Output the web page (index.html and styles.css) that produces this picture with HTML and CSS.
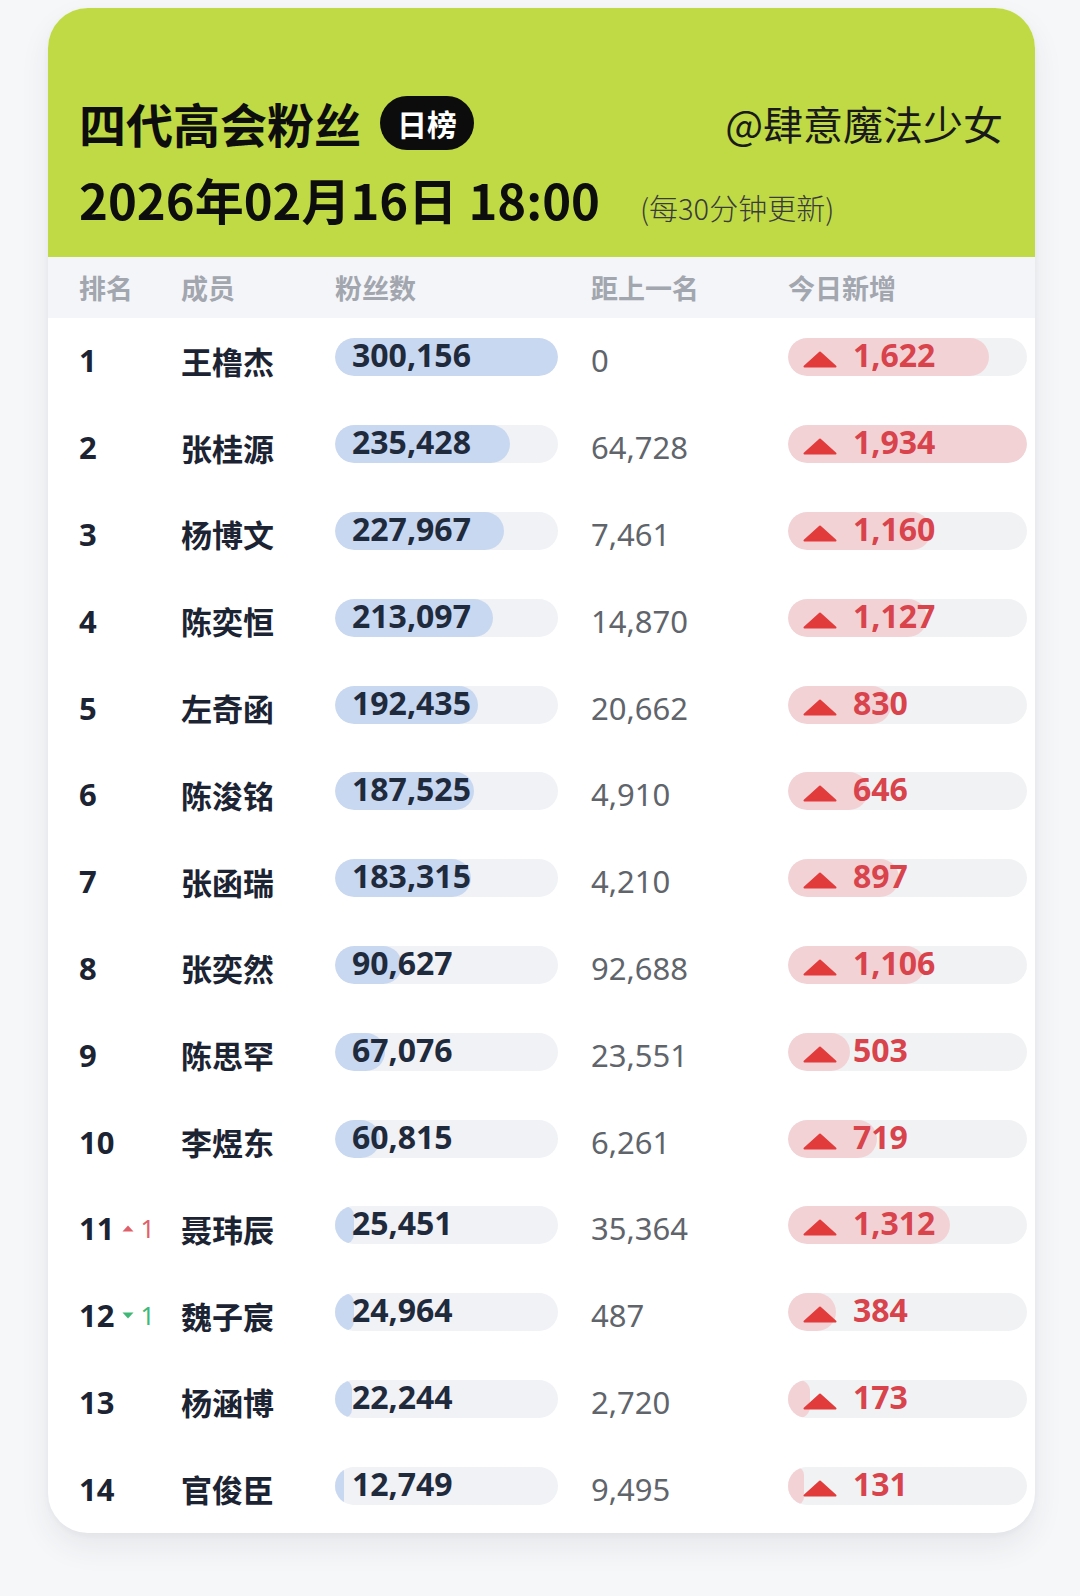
FILE: index.html
```html
<!DOCTYPE html>
<html lang="zh-CN">
<head>
<meta charset="utf-8">
<title>四代高会粉丝 日榜</title>
<link rel="stylesheet" href="styles.css">
</head>
<body>
<div class="page">
  <div class="card">
    <div class="hero">
      <div class="hero-top">
        <div class="title"><span class="title-text">四代高会粉丝</span><span class="badge">日榜</span></div>
        <div class="author">@肆意魔法少女</div>
      </div>
      <div class="date-line"><span class="date">2026年02月16日 18:00</span><span class="note">(每30分钟更新)</span></div>
    </div>
    <div class="thead">
      <div>排名</div><div>成员</div><div>粉丝数</div><div>距上一名</div><div>今日新增</div>
    </div>
    <div class="rows">
      <div class="row"><div class="rank">1</div><div class="name">王橹杰</div><div class="fans"><div class="bar"><div class="track"><div class="fill" style="width:100%"></div></div><span class="val">300,156</span></div></div><div class="dist">0</div><div class="gain"><div class="gbar"><div class="gtrack"><div class="gfill" style="width:83.9%"></div></div><svg class="tri" viewBox="0 0 34 17"><polygon points="17,1.5 32.5,15.5 1.5,15.5"/></svg><span class="gval">1,622</span></div></div></div>
      <div class="row"><div class="rank">2</div><div class="name">张桂源</div><div class="fans"><div class="bar"><div class="track"><div class="fill" style="width:78.4%"></div></div><span class="val">235,428</span></div></div><div class="dist">64,728</div><div class="gain"><div class="gbar"><div class="gtrack"><div class="gfill" style="width:100%"></div></div><svg class="tri" viewBox="0 0 34 17"><polygon points="17,1.5 32.5,15.5 1.5,15.5"/></svg><span class="gval">1,934</span></div></div></div>
      <div class="row"><div class="rank">3</div><div class="name">杨博文</div><div class="fans"><div class="bar"><div class="track"><div class="fill" style="width:76%"></div></div><span class="val">227,967</span></div></div><div class="dist">7,461</div><div class="gain"><div class="gbar"><div class="gtrack"><div class="gfill" style="width:60%"></div></div><svg class="tri" viewBox="0 0 34 17"><polygon points="17,1.5 32.5,15.5 1.5,15.5"/></svg><span class="gval">1,160</span></div></div></div>
      <div class="row"><div class="rank">4</div><div class="name">陈奕恒</div><div class="fans"><div class="bar"><div class="track"><div class="fill" style="width:71%"></div></div><span class="val">213,097</span></div></div><div class="dist">14,870</div><div class="gain"><div class="gbar"><div class="gtrack"><div class="gfill" style="width:58.3%"></div></div><svg class="tri" viewBox="0 0 34 17"><polygon points="17,1.5 32.5,15.5 1.5,15.5"/></svg><span class="gval">1,127</span></div></div></div>
      <div class="row"><div class="rank">5</div><div class="name">左奇函</div><div class="fans"><div class="bar"><div class="track"><div class="fill" style="width:64.1%"></div></div><span class="val">192,435</span></div></div><div class="dist">20,662</div><div class="gain"><div class="gbar"><div class="gtrack"><div class="gfill" style="width:42.9%"></div></div><svg class="tri" viewBox="0 0 34 17"><polygon points="17,1.5 32.5,15.5 1.5,15.5"/></svg><span class="gval">830</span></div></div></div>
      <div class="row"><div class="rank">6</div><div class="name">陈浚铭</div><div class="fans"><div class="bar"><div class="track"><div class="fill" style="width:62.5%"></div></div><span class="val">187,525</span></div></div><div class="dist">4,910</div><div class="gain"><div class="gbar"><div class="gtrack"><div class="gfill" style="width:33.4%"></div></div><svg class="tri" viewBox="0 0 34 17"><polygon points="17,1.5 32.5,15.5 1.5,15.5"/></svg><span class="gval">646</span></div></div></div>
      <div class="row"><div class="rank">7</div><div class="name">张函瑞</div><div class="fans"><div class="bar"><div class="track"><div class="fill" style="width:61.1%"></div></div><span class="val">183,315</span></div></div><div class="dist">4,210</div><div class="gain"><div class="gbar"><div class="gtrack"><div class="gfill" style="width:46.4%"></div></div><svg class="tri" viewBox="0 0 34 17"><polygon points="17,1.5 32.5,15.5 1.5,15.5"/></svg><span class="gval">897</span></div></div></div>
      <div class="row"><div class="rank">8</div><div class="name">张奕然</div><div class="fans"><div class="bar"><div class="track"><div class="fill" style="width:30.2%"></div></div><span class="val">90,627</span></div></div><div class="dist">92,688</div><div class="gain"><div class="gbar"><div class="gtrack"><div class="gfill" style="width:57.2%"></div></div><svg class="tri" viewBox="0 0 34 17"><polygon points="17,1.5 32.5,15.5 1.5,15.5"/></svg><span class="gval">1,106</span></div></div></div>
      <div class="row"><div class="rank">9</div><div class="name">陈思罕</div><div class="fans"><div class="bar"><div class="track"><div class="fill" style="width:22.3%"></div></div><span class="val">67,076</span></div></div><div class="dist">23,551</div><div class="gain"><div class="gbar"><div class="gtrack"><div class="gfill" style="width:26%"></div></div><svg class="tri" viewBox="0 0 34 17"><polygon points="17,1.5 32.5,15.5 1.5,15.5"/></svg><span class="gval">503</span></div></div></div>
      <div class="row"><div class="rank">10</div><div class="name">李煜东</div><div class="fans"><div class="bar"><div class="track"><div class="fill" style="width:20.3%"></div></div><span class="val">60,815</span></div></div><div class="dist">6,261</div><div class="gain"><div class="gbar"><div class="gtrack"><div class="gfill" style="width:37.2%"></div></div><svg class="tri" viewBox="0 0 34 17"><polygon points="17,1.5 32.5,15.5 1.5,15.5"/></svg><span class="gval">719</span></div></div></div>
      <div class="row"><div class="rank">11<span class="chg up"><svg viewBox="0 0 12 7"><polygon points="6,0.5 11.5,6.5 0.5,6.5"/></svg>1</span></div><div class="name">聂玮辰</div><div class="fans"><div class="bar"><div class="track"><div class="fill" style="width:8.5%"></div></div><span class="val">25,451</span></div></div><div class="dist">35,364</div><div class="gain"><div class="gbar"><div class="gtrack"><div class="gfill" style="width:67.8%"></div></div><svg class="tri" viewBox="0 0 34 17"><polygon points="17,1.5 32.5,15.5 1.5,15.5"/></svg><span class="gval">1,312</span></div></div></div>
      <div class="row"><div class="rank">12<span class="chg down"><svg viewBox="0 0 12 7"><polygon points="0.5,0.5 11.5,0.5 6,6.5"/></svg>1</span></div><div class="name">魏子宸</div><div class="fans"><div class="bar"><div class="track"><div class="fill" style="width:8.3%"></div></div><span class="val">24,964</span></div></div><div class="dist">487</div><div class="gain"><div class="gbar"><div class="gtrack"><div class="gfill" style="width:19.9%"></div></div><svg class="tri" viewBox="0 0 34 17"><polygon points="17,1.5 32.5,15.5 1.5,15.5"/></svg><span class="gval">384</span></div></div></div>
      <div class="row"><div class="rank">13</div><div class="name">杨涵博</div><div class="fans"><div class="bar"><div class="track"><div class="fill" style="width:7.4%"></div></div><span class="val">22,244</span></div></div><div class="dist">2,720</div><div class="gain"><div class="gbar"><div class="gtrack"><div class="gfill" style="width:9%"></div></div><svg class="tri" viewBox="0 0 34 17"><polygon points="17,1.5 32.5,15.5 1.5,15.5"/></svg><span class="gval">173</span></div></div></div>
      <div class="row"><div class="rank">14</div><div class="name">官俊臣</div><div class="fans"><div class="bar"><div class="track"><div class="fill" style="width:4.2%"></div></div><span class="val">12,749</span></div></div><div class="dist">9,495</div><div class="gain"><div class="gbar"><div class="gtrack"><div class="gfill" style="width:6.8%"></div></div><svg class="tri" viewBox="0 0 34 17"><polygon points="17,1.5 32.5,15.5 1.5,15.5"/></svg><span class="gval">131</span></div></div></div>
    </div>
  </div>
</div>
</body>
</html>
```

FILE: styles.css
```css
html, body {
  margin: 0;
  padding: 0;
}
body {
  background: #f6f7f9;
  font-family: "Noto Sans", "Noto Sans CJK SC", sans-serif;
  color: #1c2433;
  width: 1080px;
  height: 1596px;
  overflow: hidden;
}
.page {
  padding: 8px 45px 0 48px;
}
.card {
  width: 987px;
  background: #ffffff;
  border-radius: 40px;
  overflow: hidden;
  box-shadow: 0 14px 30px rgba(40, 50, 70, 0.08), 0 2px 6px rgba(40, 50, 70, 0.04);
}
.hero {
  background: #bfda45;
  height: 249px;
  box-sizing: border-box;
  padding: 88px 32px 0 31px;
  font-family: "Noto Sans CJK SC", sans-serif;
}
.hero-top {
  display: flex;
  align-items: center;
  justify-content: space-between;
  height: 54px;
}
.title {
  display: flex;
  align-items: center;
  gap: 19px;
}
.title-text {
  font-size: 47px;
  font-weight: 700;
  color: #0d0d0d;
  line-height: 54px;
}
.badge {
  display: inline-flex;
  align-items: center;
  justify-content: center;
  width: 94px;
  height: 54px;
  border-radius: 27px;
  background: #0c0c0c;
  color: #ffffff;
  font-size: 30px;
  font-weight: 700;
}
.author {
  font-size: 40px;
  font-weight: 400;
  color: #1a1a1a;
  line-height: 54px;
}
.date-line {
  display: flex;
  align-items: baseline;
  gap: 40px;
  margin-top: 20px;
}
.date {
  font-size: 49px;
  font-weight: 700;
  color: #0d0d0d;
  line-height: 58px;
}
.note {
  font-size: 29px;
  font-weight: 300;
  color: #3b3b3b;
}
.thead {
  display: grid;
  grid-template-columns: 102px 154px 256px 197px 239px;
  align-items: center;
  height: 61px;
  padding-left: 31px;
  background: #f4f5f8;
  font-family: "Noto Sans CJK SC", sans-serif;
  font-size: 27px;
  font-weight: 700;
  color: #a2a6ae;
}
.row {
  display: grid;
  grid-template-columns: 102px 154px 256px 197px 239px;
  align-items: center;
  height: 86.8px;
  box-sizing: border-box;
  padding: 0 0 8px 31px;
}
.rank, .name, .dist {
  padding-top: 6px;
}
.rank {
  display: flex;
  align-items: center;
  font-size: 31px;
  font-weight: 700;
  color: #1c2433;
}
.chg {
  display: inline-flex;
  align-items: center;
  gap: 6px;
  margin-left: 8px;
  font-size: 25px;
  font-weight: 400;
}
.chg svg {
  width: 12px;
  height: 7px;
}
.chg.up { color: #e0606a; }
.chg.up svg { fill: #e0606a; }
.chg.down { color: #3fb877; }
.chg.down svg { fill: #3fb877; }
.name {
  font-family: "Noto Sans CJK SC", sans-serif;
  font-size: 31px;
  font-weight: 700;
  color: #1c2433;
}
.bar, .gbar {
  position: relative;
  height: 38px;
  display: flex;
  align-items: center;
}
.track, .gtrack {
  position: absolute;
  inset: 0;
  border-radius: 19px;
  overflow: hidden;
}
.bar { width: 223px; }
.track { background: #f1f2f5; }
.fill, .gfill {
  height: 100%;
  border-radius: 19px;
}
.fill { background: #c9d8f1; }
.val {
  position: relative;
  padding-left: 17px;
  font-size: 32px;
  font-weight: 700;
  color: #1f2b3d;
  line-height: 38px;
  margin-top: -4px;
}
.dist {
  font-size: 31px;
  font-weight: 400;
  color: #60646b;
}
.gbar { width: 239px; }
.gtrack { background: #f1f2f4; }
.gfill { background: #f3d2d6; }
.tri {
  position: relative;
  width: 34px;
  height: 17px;
  margin-left: 15px;
  margin-top: 5px;
  fill: #e23b3b;
  stroke: #e23b3b;
  stroke-width: 2;
  stroke-linejoin: round;
}
.gval {
  position: relative;
  margin-left: 16px;
  font-size: 32px;
  font-weight: 700;
  color: #d8434c;
  line-height: 38px;
  margin-top: -4px;
}
```
